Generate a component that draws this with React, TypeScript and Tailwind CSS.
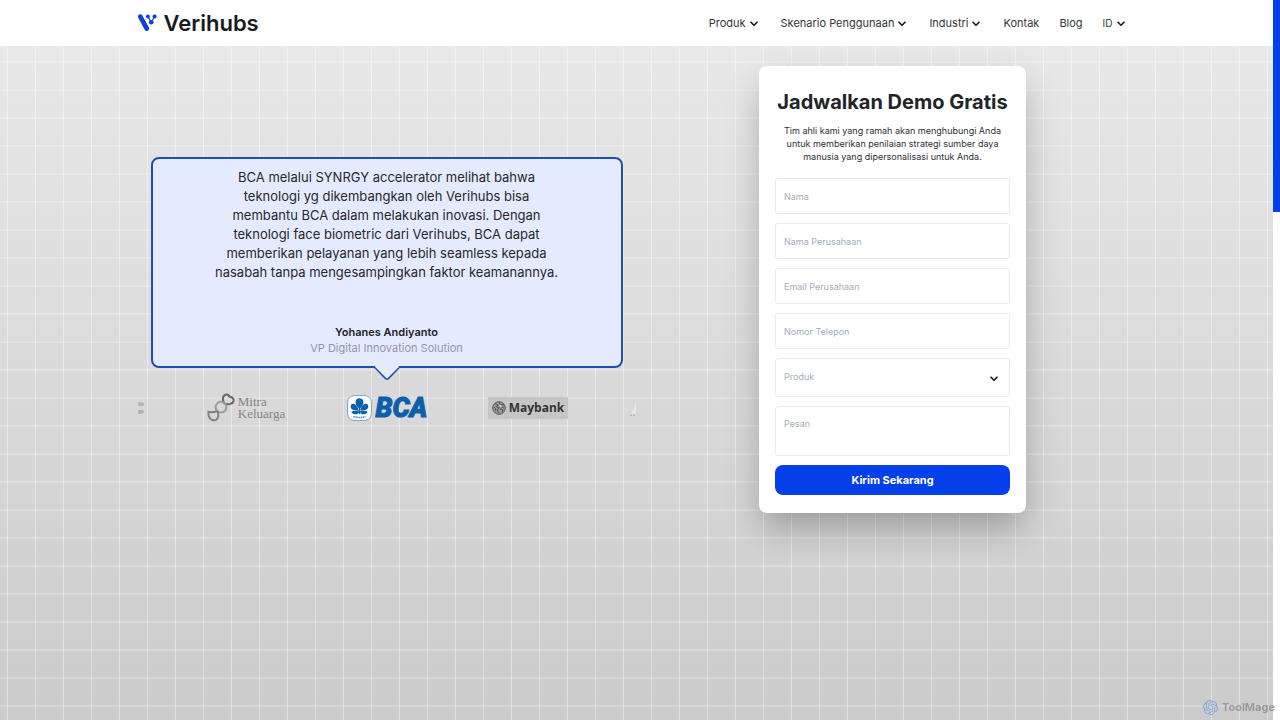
import type { ReactNode } from "react";
import { SiOpenai } from "react-icons/si";

const navItems = [
  { label: "Produk", menu: true },
  { label: "Skenario Penggunaan", menu: true },
  { label: "Industri", menu: true },
];

const fields = [
  { id: "name", label: "Nama", type: "text" },
  { id: "company", label: "Nama Perusahaan", type: "text" },
  { id: "email", label: "Email Perusahaan", type: "email" },
  { id: "phone", label: "Nomor Telepon", type: "tel" },
];

function Chevron() {
  return (
    <svg className="w-2 h-2" viewBox="0 0 8 8" fill="none" stroke="#16181b" strokeWidth="1.6" strokeLinecap="round" strokeLinejoin="round" aria-hidden="true">
      <path d="M1 3.2 4 6.2 7 3.2" />
    </svg>
  );
}

function VerihubsMark() {
  return (
    <svg className="w-5 h-5" viewBox="0 0 20 20" aria-hidden="true">
      <path d="M3.300 3.700 9.800 15.600" stroke="#0f44d8" strokeWidth="4.800" strokeLinecap="round" />
      <path d="M11 3.500 14.200 9.300 17.600 3.500" stroke="#0f44d8" strokeWidth="1.300" fill="none" />
      <circle cx="10.900" cy="3.500" r="2" fill="#0f44d8" />
      <circle cx="17.600" cy="3.500" r="2.100" fill="#0f44d8" />
      <circle cx="14.200" cy="9.300" r="2.300" fill="#0f44d8" />
    </svg>
  );
}

function Header() {
  return (
    <header className="bg-white h-[46px] shrink-0">
      <div className="max-w-[1000px] h-full mx-auto pr-3 flex items-center justify-between">
        <a href="#" className="flex items-center gap-[7px] text-[22px] leading-6 font-semibold text-[#191b1f]">
          <VerihubsMark />
          Verihubs
        </a>
        <nav className="flex items-center text-[11px] leading-4 text-[#33363a]">
          <div className="flex items-center gap-[23px]">
            {navItems.map((item) => (
              <button key={item.label} type="button" className="flex items-center gap-1">
                {item.label}
                {item.menu && <Chevron />}
              </button>
            ))}
            <a href="#kontak">Kontak</a>
          </div>
          <a href="#blog" className="ml-5">Blog</a>
          <button type="button" className="ml-5 flex items-center gap-1 text-[10px]">
            ID
            <Chevron />
          </button>
        </nav>
      </div>
    </header>
  );
}

function MitraLogo() {
  return (
    <div className="flex items-center gap-[3px] text-[#868686]">
      <svg className="w-7 h-[30px]" viewBox="0 0 28 30" fill="none" strokeWidth="2" aria-hidden="true">
        <path d="M17.2 10.500C14.600 6 16 1.800 19.200 1.400c1.800-.1 2.800.9 3.400 2.400 2.400 0 4.400 1.800 4 4.200-.6 2.800-4.800 4-9.400 2.500Z" stroke="#686868" />
        <circle cx="14" cy="14.200" r="5.400" stroke="#9c9c9c" />
        <path d="M1.400 18.800c2.600.8 6 .2 9-.6 1.400 2.800 1.600 7-1.400 8.600-3.800 1.800-8-1-7.600-8Z" stroke="#828282" />
      </svg>
      <p className="font-['Liberation_Serif',serif] text-[13px] leading-3">
        Mitra
        <br />
        Keluarga
      </p>
    </div>
  );
}

function BcaLogo() {
  return (
    <div className="flex items-center gap-1">
      <svg className="w-[25px] h-[26px]" viewBox="0 0 25 26" aria-hidden="true">
        <path d="M6 .8Q12.5 0 19 .8 24 1.6 24.3 7q.4 6 0 12-.5 5.4-5.3 6.2-6.5.7-13 0Q1.200 24.400.7 19q-.4-6 0-12Q1.200 1.600 6 .8Z" fill="#fff" stroke="#6f9cc8" strokeWidth=".9" />
        <g fill="#0c5fac">
          <path d="M12.5 14C8.500 10.500 8.200 7.800 8.900 5.400 9.800 2.600 15.200 2.600 16.100 5.400c.7 2.400.4 5.100-3.600 8.600Z" />
          <path d="M11.800 15.400C10.600 11 8 8 5.500 8.800 2.900 9.600 3.200 13.600 5.500 14.600c1.800.9 3.600 1 6.300.8Z" />
          <path d="M13.200 15.400C14.400 11 17 8 19.500 8.800c2.600.8 2.300 4.800 0 5.800-1.800.9-3.600 1-6.300.8Z" />
          <path d="M11.800 16C8.500 15.400 5.200 15.600 4.400 17c1.400 2.800 6.400 3.200 7.400.6Z" />
          <path d="M13.200 16c3.300-.6 6.600-.4 7.400 1-1.400 2.800-6.400 3.200-7.400.6Z" />
          <path d="M12 12h1l.4 7h-1.800Z" />
        </g>
        <path d="M6.500 21.600q6 1.700 12 0" fill="none" stroke="#3f7dba" strokeWidth="1.500" strokeDasharray="1.300 .6" />
      </svg>
      <span className="font-[Roboto,sans-serif] font-black italic text-[27px] leading-[30px] text-[#0c5fac] [-webkit-text-stroke:1px_#0c5fac]">BCA</span>
    </div>
  );
}

function MaybankLogo() {
  return (
    <div className="w-20 h-[22px] bg-[#c6c6c6] flex items-center justify-center gap-[3px]">
      <svg className="w-[14px] h-[14px]" viewBox="0 0 14 14" fill="none" stroke="#4d4d4d" aria-hidden="true">
        <circle cx="7" cy="7" r="6.300" fill="#999" strokeWidth=".9" />
        <path d="M3 2.500 6 4 4.500 6 7.500 7 5 9l2 3M7 1.500l2 2 3 .5M8 5l4 2M8 8l3 1-1 2.500M2 6l2 2-1 2" strokeWidth=".9" />
        <path d="M6.500 4.800 8 3l2.500 2L9 7.500Z" fill="#d0d0d0" strokeWidth=".5" />
      </svg>
      <span className="font-['Open_Sans',sans-serif] font-bold text-[12px] leading-4 text-[#333]">Maybank</span>
    </div>
  );
}

function Slide({ children }: { children: ReactNode }) {
  return <div className="w-[141px] shrink-0 flex justify-center">{children}</div>;
}

function Testimonial() {
  return (
    <section className="w-1/2 pt-[111px]">
      <figure className="relative mx-[14px] h-[211px] flex flex-col items-center justify-between border-2 border-[#1f4fb0] rounded-lg bg-[#e5ebff] pt-[9px] pb-[10px] text-center">
        <blockquote className="w-[368px] text-[13px] leading-[19px] text-[#25282c]">
          BCA melalui SYNRGY accelerator melihat bahwa
          <br />
          teknologi yg dikembangkan oleh Verihubs bisa
          <br />
          membantu BCA dalam melakukan inovasi. Dengan
          <br />
          teknologi face biometric dari Verihubs, BCA dapat
          <br />
          memberikan pelayanan yang lebih seamless kepada
          <br />
          nasabah tanpa mengesampingkan faktor keamanannya.
        </blockquote>
        <figcaption className="text-[11px] leading-4 text-[#9296a3]">
          <div className="font-semibold text-[#202328]">Yohanes Andiyanto</div>
          VP Digital Innovation Solution
        </figcaption>
        {/* Bubble tail */}
        <svg className="absolute left-1/2 top-full -translate-x-1/2 w-7 h-[15px]" viewBox="0 0 28 15" aria-hidden="true">
          <path d="M0 1H1.200L12.400 12.400Q14 14 15.600 12.400L26.800 1H28" fill="#e5ebff" stroke="#1f4fb0" strokeWidth="1.500" />
          <path d="M2.200 0H25.800V1.200H2.200Z" fill="#e5ebff" />
        </svg>
      </figure>

      {/* Client logos */}
      <div className="mt-[25px] h-[30px] flex items-center justify-center overflow-hidden">
        <div className="flex-1 pl-px">
          <svg className="w-[7px] h-4" viewBox="0 0 7 16" fill="#b5b5b5" aria-hidden="true">
            <path d="M0 2.500Q4 .8 6.500 4L5 6Q2 6.500 0 5.500ZM0 13.500Q4 15.200 6.500 12L5 10Q2 9.500 0 10.500Z" />
          </svg>
        </div>
        <Slide><MitraLogo /></Slide>
        <Slide><BcaLogo /></Slide>
        <Slide><MaybankLogo /></Slide>
        <div className="flex-1 flex justify-end">
          <svg className="w-2 h-4" viewBox="0 0 8 16" aria-hidden="true">
            <path d="M2 13.500Q6 8 7 0v13.500Z" fill="#e9e9e9" />
            <path d="M1 15.300h6" stroke="#a9a9a9" strokeDasharray="2 1" />
          </svg>
        </div>
      </div>
    </section>
  );
}

function DemoForm() {
  return (
    <section className="w-1/2 pl-3 pt-5 flex justify-center items-start">
      <form className="w-[267px] bg-white rounded-lg px-4 pt-6 pb-[18px] shadow-[0_18px_36px_-4px_rgba(0,0,0,0.28)]">
        <h1 className="-mx-2 text-center text-[20px] leading-6 font-bold text-[#222428]">Jadwalkan Demo Gratis</h1>
        <p className="mt-[10px] text-center text-[9px] leading-[13px] text-[#2d3034]">
          Tim ahli kami yang ramah akan menghubungi Anda untuk memberikan penilaian strategi sumber daya manusia yang dipersonalisasi untuk Anda.
        </p>
        <div className="mt-[15px] flex flex-col gap-[9px] text-[9px]">
          {fields.map((field) => (
            <input
              key={field.id}
              id={field.id}
              type={field.type}
              aria-label={field.label}
              placeholder={field.label}
              className="h-9 w-full rounded-[3px] border border-[#e8eaec] px-2 placeholder:text-[#a2adb9]"
            />
          ))}
          <div className="relative">
            <select aria-label="Produk" className="block h-[39px] w-full appearance-none rounded-[3px] border border-[#e8eaec] bg-white px-2 pb-[2px] text-[#a2adb9]">
              <option>Produk</option>
            </select>
            <span className="pointer-events-none absolute inset-y-0 right-3 flex items-center">
              <Chevron />
            </span>
          </div>
          <textarea
            aria-label="Pesan"
            placeholder="Pesan"
            className="block h-[50px] w-full resize-none rounded-[3px] border border-[#e8eaec] px-2 py-[10px] placeholder:text-[#a2adb9]"
          />
          <button type="submit" className="h-[30px] rounded-lg bg-[#043fea] text-[11px] font-bold text-white">
            Kirim Sekarang
          </button>
        </div>
      </form>
    </section>
  );
}

function Watermark() {
  return (
    <div className="fixed bottom-[5px] right-[5px] flex items-center gap-1 text-[11px] leading-4 font-bold text-[#999]">
      <SiOpenai className="w-[15px] h-[15px] text-[#86a5dc]" aria-hidden="true" />
      ToolMage
    </div>
  );
}

export default function App() {
  return (
    <div className="flex min-h-screen bg-white font-[Inter,sans-serif]">
      <div className="flex-1 flex flex-col">
        <Header />
        {/* Grid lines over a soft grey fade */}
        <main className="flex-1 bg-[linear-gradient(to_right,rgba(255,255,255,0.4)_1px,transparent_1px),linear-gradient(to_bottom,rgba(255,255,255,0.22)_2px,transparent_2px),linear-gradient(to_bottom,#e8e8e8,#cbcbcb)] bg-[length:28px_28px,28px_28px,100%_100%] bg-[position:7px_0,0_15px,0_0]">
          <div className="max-w-[1000px] mx-auto flex items-start">
            <Testimonial />
            <DemoForm />
          </div>
        </main>
      </div>
      {/* Page scroll indicator */}
      <div className="w-[7px] shrink-0">
        <div className="h-[212px] bg-[#043fea]" />
      </div>
      <Watermark />
    </div>
  );
}
